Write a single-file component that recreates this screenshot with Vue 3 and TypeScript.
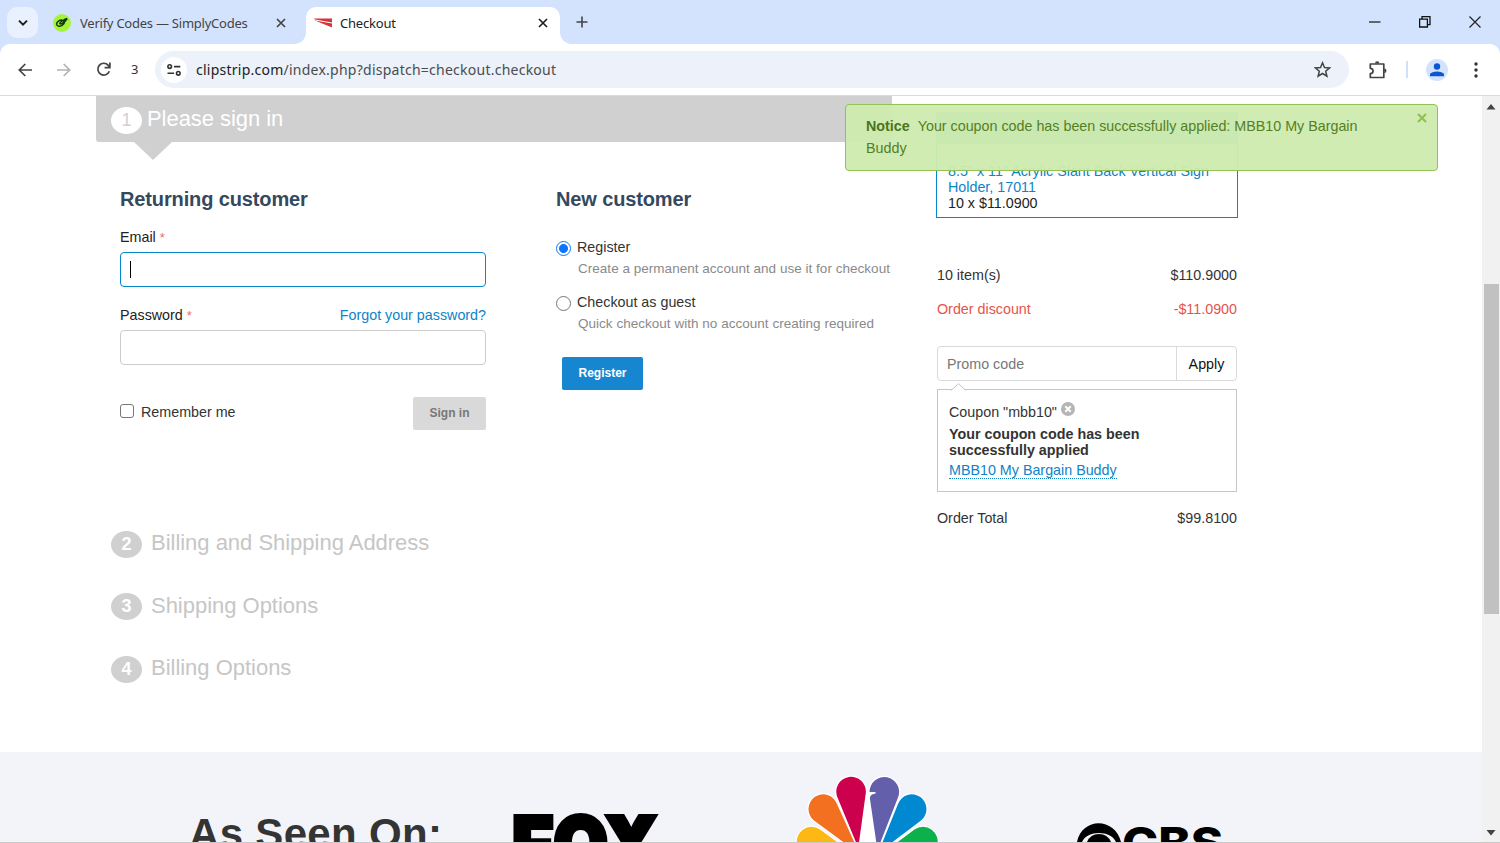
<script setup lang="ts">
import { ref } from 'vue'

interface Step {
  number: number
  title: string
}

const steps: Step[] = [
  { number: 2, title: 'Billing and Shipping Address' },
  { number: 3, title: 'Shipping Options' },
  { number: 4, title: 'Billing Options' },
]

const account = ref<'register' | 'guest'>('register')
const couponOpen = ref(true)
const noticeOpen = ref(true)
</script>

<template>
  <div class="window">
    <header class="tabs">
      <button class="tab-search" aria-label="Search tabs">
        <svg width="12" height="8" viewBox="0 0 12 8"><path d="M2 1.600 6 5.600 10 1.600" fill="none" stroke="#1f1f1f" stroke-width="2" /></svg>
      </button>
      <div class="tab tab-idle">
        <svg class="fav" width="18" height="18" viewBox="0 0 18 18">
          <circle cx="9" cy="9" r="9" fill="#a4f43c" />
          <path d="M9.500 6C6 6 3.400 8 3.600 10.200c.2 2.400 4 2.600 6.300.6 1.700-1.500 2-3.200.9-3.800-1.500-.7-3.600 1.100-4 2.700 2 1 4-.5 7.500-5.200M10.500 6l3.500-1.700" fill="none" stroke="#12370f" stroke-width="1.500" />
        </svg>
        <span class="tab-title verify">Verify Codes — SimplyCodes</span>
        <svg class="tab-x" width="10" height="10" viewBox="0 0 10 10"><path d="M1 1 9 9M9 1 1 9" stroke="#444" stroke-width="1.700" /></svg>
      </div>
      <div class="tab tab-active">
        <svg class="clip" width="18" height="10" viewBox="0 0 18 10">
          <path d="M0 .5H18V9.500L1 2.500Z" fill="#d6333d" />
          <path d="M0 1.800 18 5" stroke="#fff" stroke-width="1" />
        </svg>
        <span class="tab-title check">Checkout</span>
        <svg class="tab-x" width="10" height="10" viewBox="0 0 10 10"><path d="M1 1 9 9M9 1 1 9" stroke="#1f1f1f" stroke-width="1.700" /></svg>
      </div>
      <svg class="plus" width="12" height="12" viewBox="0 0 12 12"><path d="M6 .5V11.500M.5 6H11.500" stroke="#444" stroke-width="1.600" /></svg>
      <div class="controls">
        <svg width="12" height="12" viewBox="0 0 12 12"><path d="M0 6H11.500" stroke="#222" stroke-width="1.300" /></svg>
        <svg width="12" height="12" viewBox="0 0 12 12"><path d="M.6 3.200H8.400V11H.6ZM3 3V.7H11V8.600H8.700" fill="none" stroke="#111" stroke-width="1.300" /></svg>
        <svg width="12" height="12" viewBox="0 0 12 12"><path d="M.5.5 11.500 11.500M11.500.5.5 11.500" stroke="#222" stroke-width="1.200" /></svg>
      </div>
    </header>

    <nav class="toolbar">
      <svg class="back" width="14" height="14" viewBox="0 0 14 14"><path d="M14 7H1.500M7.300 1 1.300 7l6 6" fill="none" stroke="#444" stroke-width="1.700" /></svg>
      <svg class="forward" width="14" height="14" viewBox="0 0 14 14"><path d="M0 7H12.500M6.700 1 12.700 7l-6 6" fill="none" stroke="#b3b3b3" stroke-width="1.700" /></svg>
      <svg class="reload" width="15" height="15" viewBox="0 0 15 15"><path d="M13.300 9.200A5.900 5.900 0 1 1 12.300 3.400L13.700 5.300M13.900.6V5.600H8.600" fill="none" stroke="#444" stroke-width="1.700" /></svg>
      <span class="count">3</span>
      <div class="address">
        <span class="site">
          <svg width="14" height="12" viewBox="0 0 14 12"><g fill="none" stroke="#333" stroke-width="1.600"><circle cx="2.700" cy="2.600" r="1.800" /><path d="M7 2.600H13.300M.5 9.300H7" /><circle cx="11.300" cy="9.300" r="1.800" /></g></svg>
        </span>
        <span class="url">clipstrip.com<i>/index.php?dispatch=checkout.checkout</i></span>
        <svg class="star" width="17" height="17" viewBox="0 0 17 17"><path d="M8.500 1.800 10.500 6.500 15.600 6.900 11.700 10.200 12.900 15.200 8.500 12.500 4.100 15.200 5.300 10.200 1.400 6.900 6.500 6.500Z" fill="none" stroke="#444" stroke-width="1.500" /></svg>
      </div>
      <svg class="puzzle" width="18" height="18" viewBox="0 0 18 18"><path d="M1.300 3H14.800V16.500H1.300V12.700C5 12.500 5 7.600 1.300 7.300Z" fill="none" stroke="#444" stroke-width="1.700" stroke-linejoin="round" /><path d="M6 2.500a2.200 2.200 0 0 1 4.400 0ZM15.300 7.500a2.200 2.200 0 0 1 0 4.400Z" fill="#444" /></svg>
      <span class="divider" />
      <span class="profile"><svg width="14" height="14" viewBox="0 0 14 14"><circle cx="7" cy="3.500" r="3.200" fill="#0b57d0" /><path d="M0 13.300V11C1.500 7.500 12.500 7.500 14 11V13.300Z" fill="#0b57d0" /></svg></span>
      <svg class="dots" width="4" height="16" viewBox="0 0 4 16" fill="#333"><circle cx="2" cy="2" r="1.700" /><circle cx="2" cy="8" r="1.700" /><circle cx="2" cy="14" r="1.700" /></svg>
    </nav>

    <div class="viewport">
      <main class="page">
        <div class="checkout">
          <section class="steps">
            <h2 class="current"><span class="badge">1</span><span class="t-sign">Please sign in</span></h2>
            <div class="forms">
              <form class="returning" @submit.prevent>
                <h3 class="t-ret">Returning customer</h3>
                <div class="label"><span>Email</span><b>*</b></div>
                <div class="field focused"><span class="caret" /></div>
                <div class="label second"><span>Password</span><b>*</b><a>Forgot your password?</a></div>
                <div class="field" />
                <div class="actions">
                  <span class="box" /><span class="t-rem">Remember me</span>
                  <button class="signin">Sign in</button>
                </div>
              </form>
              <form class="new" @submit.prevent>
                <h3 class="t-new">New customer</h3>
                <div class="option" @click="account = 'register'">
                  <span class="radio" :class="{ on: account === 'register' }" /><span>Register</span>
                </div>
                <p>Create a permanent account and use it for checkout</p>
                <div class="option" @click="account = 'guest'">
                  <span class="radio" :class="{ on: account === 'guest' }" /><span>Checkout as guest</span>
                </div>
                <p>Quick checkout with no account creating required</p>
                <button class="register">Register</button>
              </form>
            </div>
            <ol class="later">
              <li v-for="step in steps" :key="step.number">
                <span class="badge">{{ step.number }}</span><span class="step-title">{{ step.title }}</span>
              </li>
            </ol>
          </section>

          <aside class="summary">
            <div class="product">
              <div class="product-head" />
              <a>8.5" x 11" Acrylic Slant Back Vertical Sign</a>
              <a>Holder, 17011</a>
              <span class="t-qty">10 x $11.0900</span>
            </div>
            <div class="row"><span>10 item(s)</span><span>$110.9000</span></div>
            <div class="row discount"><span>Order discount</span><span>-$11.0900</span></div>
            <div class="promo"><span>Promo code</span><button>Apply</button></div>
            <div v-if="couponOpen" class="coupon">
              <svg class="notch" width="15" height="8" viewBox="0 0 15 8"><path d="M0 7.500 7.500.7 15 7.500V8H0Z" fill="#fff" /><path d="M0 7.500 7.500.7 15 7.500" fill="none" stroke="#c6c6c6" /></svg>
              <div class="coupon-name">
                <span>Coupon "mbb10"</span>
                <svg width="14" height="14" viewBox="0 0 14 14" @click="couponOpen = false"><circle cx="7" cy="7" r="7" fill="#b5b5b5" /><path d="M4.300 4.300 9.700 9.700M9.700 4.300 4.300 9.700" stroke="#fff" stroke-width="2" /></svg>
              </div>
              <strong>Your coupon code has been</strong>
              <strong>successfully applied</strong>
              <a class="t-mbb">MBB10 My Bargain Buddy</a>
            </div>
            <div class="row total"><span>Order Total</span><span>$99.8100</span></div>
          </aside>
        </div>

        <footer class="seen">
          <svg width="1482" height="90" viewBox="0 752 1482 90">
            <text class="as" x="189" y="848" textLength="253">As Seen On:</text>
            <text class="fox" x="512" y="871" textLength="147" lengthAdjust="spacingAndGlyphs">FOX</text>
            <g stroke="#fff" stroke-width="2.400" paint-order="stroke">
              <path d="M868 794 878 796 881 860H855Z" fill="#fff" />
              <path d="M848 850 820 829.500A14.700 14.700 0 0 0 797.500 846L830 860Z" fill="#fdb813" />
              <path d="M887 850 914.500 829.500A14.700 14.700 0 0 1 937 846L900 860Z" fill="#0db14b" />
              <path d="M856 846 837 804A14.700 14.700 0 1 0 814 820.500L846 844Z" fill="#f37021" />
              <path d="M881 846 898 804A14.700 14.700 0 1 1 921 820.500L890 844Z" fill="#0089d0" />
              <path d="M857.500 846 837.500 797.500A14.800 14.800 0 1 1 865.800 793L858.500 846Z" fill="#cc004c" />
              <path d="M879 846 898 797.500A14.800 14.800 0 1 0 869.500 792H875.500V793.500L872 794.500Q869.500 796 870 799L876.800 846Z" fill="#645faa" />
            </g>
            <path d="M1077 842C1082 817 1115 817 1121 842L1116 842C1111 830 1087 830 1082 842Z" fill="#000" />
            <path d="M1087 842A13 13 0 0 1 1111 842Z" fill="#000" />
            <text class="cbs" x="1122" y="858" textLength="101" lengthAdjust="spacingAndGlyphs">CBS</text>
          </svg>
        </footer>
      </main>
      <div class="scrollbar">
        <svg width="10" height="6" viewBox="0 0 10 6"><path d="M5 0 9.500 5.500H.5Z" fill="#444" /></svg>
        <div class="thumb" />
        <svg width="10" height="6" viewBox="0 0 10 6"><path d="M5 5.500 9.500 0H.5Z" fill="#444" /></svg>
      </div>
      <div v-if="noticeOpen" class="notice">
        <div><strong>Notice</strong><span>Your coupon code has been successfully applied: MBB10 My Bargain</span></div>
        <div>Buddy</div>
        <svg class="dismiss" width="10" height="10" viewBox="0 0 10 10" @click="noticeOpen = false"><path d="M1 1 9 9M9 1 1 9" stroke="#8fc152" stroke-width="2.200" /></svg>
      </div>
    </div>
  </div>
</template>

<style>
body { margin: 0; background: #fff; overflow: hidden; }
</style>

<style scoped>
* { box-sizing: border-box; }
.window { width: 1500px; height: 843px; overflow: hidden; display: flex; flex-direction: column; background: linear-gradient(#d3e3fd 60px, #fff 60px); font-family: "Liberation Sans", Arial, sans-serif; font-size: 14.3px; color: #333; white-space: nowrap; }
svg { display: block; flex: none; }
button { border: 0; padding: 0; font: inherit; background: none; }
h2, h3, p, ol { margin: 0; padding: 0; }

.tabs { height: 44px; flex: none; background: #d3e3fd; display: flex; align-items: flex-start; font-family: "Noto Sans", sans-serif; }
.tab-search { width: 31px; height: 31px; margin: 7px 0 0 7px; border-radius: 10px; background: #e9f1fe; display: flex; align-items: center; justify-content: center; }
.tab { height: 37px; margin-top: 7px; display: flex; align-items: center; padding-bottom: 5px; }
.tab-idle { width: 252px; margin-left: 15px; color: #444; }
.tab-title { margin-left: 9px; font-size: 13px; line-height: 18px; }
.verify { letter-spacing: -.24px; }
.check { letter-spacing: -.2px; margin-left: 8px; }
.tab-x { margin-left: auto; }
.tab-idle .tab-x { margin-right: 19px; }
.tab-active { position: relative; width: 254px; margin-left: 1px; border-radius: 10px 10px 0 0; background: #fff; padding-left: 8px; color: #222; }
.tab-active::before, .tab-active::after { content: ""; position: absolute; bottom: 0; width: 11px; height: 11px; }
.tab-active::before { left: -11px; background: radial-gradient(circle at 0 0, transparent 10.500px, #fff 11px); }
.tab-active::after { right: -11px; background: radial-gradient(circle at 100% 0, transparent 10.500px, #fff 11px); }
.tab-active .tab-x { margin-right: 12px; }
.plus { margin: 16px 0 0 16px; }
.controls { margin: 16px 19px 0 auto; display: flex; gap: 38px; }

.toolbar { height: 52px; flex: none; background: #fff; border-bottom: 1px solid #dcdcdc; display: flex; align-items: center; border-radius: 10px 10px 0 0; font-family: "Noto Sans", sans-serif; color: #333; }
.back { margin-left: 18px; }
.forward { margin-left: 25px; }
.reload { margin-left: 25px; }
.count { margin: -2px 0 0 20px; width: 8px; font-size: 13px; }
.address { margin-left: 16px; width: 1194px; height: 37px; border-radius: 19px; background: #ecf1fa; display: flex; align-items: center; padding-left: 6px; }
.site { width: 26px; height: 26px; border-radius: 50%; background: #fff; display: flex; align-items: center; justify-content: center; }
.url { margin-left: 9px; font-size: 14px; letter-spacing: .245px; color: #222; }
.url i { font-style: normal; color: #494c50; }
.star { margin-left: auto; margin-right: 18px; }
.puzzle { margin-left: 20px; }
.divider { margin-left: 19px; width: 2px; height: 17px; background: #cfe0fc; }
.profile { margin-left: 18px; width: 22px; height: 22px; border-radius: 50%; background: #d3e3fd; display: flex; align-items: center; justify-content: center; }
.dots { margin-left: 26px; }

.viewport { position: relative; flex: 1; min-height: 0; display: flex; background: #fff; border-bottom: 1px solid #c9c9c9; }
.page { width: 1482px; overflow: hidden; }
.checkout { height: 656px; display: flex; padding-left: 96px; }
.steps { width: 796px; }
.current { position: relative; height: 46px; background: #d0d0d0; border-radius: 0 0 3px 3px; color: #fff; display: flex; align-items: center; padding-left: 15px; font-weight: 400; font-size: 22px; }
.current::after { content: ""; position: absolute; left: 38px; top: 46px; border: 19px solid transparent; border-top: 18px solid #d0d0d0; border-bottom: 0; }
.badge { width: 31px; height: 27px; border-radius: 50%; display: flex; align-items: center; justify-content: center; font-size: 18px; font-weight: 700; background: #d0d0d0; color: #fff; }
.current .badge { margin-top: 2px; background: #fff; color: #d0d0d0; font-weight: 400; }
.t-sign { margin-left: 5px; letter-spacing: -.05px; }
.forms { display: flex; height: 362px; padding: 45px 0 0 24px; }
h3 { font-size: 20px; line-height: 24px; color: #34495e; letter-spacing: -.13px; }
.returning { width: 366px; }
.new { margin-left: 70px; }
.label { display: flex; height: 20px; align-items: center; margin-top: 16px; color: #222; }
.label b { color: #ee6e5c; font-weight: 400; margin-left: 4px; font-size: 13px; }
.label.second { margin-top: 18px; }
.label a { margin-left: auto; }
a { color: #0e84c8; }
.field { height: 35px; border: 1px solid #ccc; border-radius: 4px; margin-top: 5px; display: flex; align-items: center; padding-left: 9px; }
.focused { border-color: #0388cc; }
.caret { width: 1px; height: 17px; background: #000; }
.actions { display: flex; align-items: center; margin-top: 32px; height: 33px; }
.box { width: 14px; height: 14px; border: 1px solid #767676; border-radius: 3px; margin-top: -5px; }
.t-rem { margin: -3px 0 0 7px; }
.signin { margin-left: auto; width: 73px; height: 33px; padding-bottom: 2px; background: #d9d9d9; color: #777; font-size: 12px; font-weight: 700; border-radius: 2px; }
.option { display: flex; align-items: center; height: 20px; margin-top: 14px; }
.t-new + .option { margin-top: 26px; }
.radio { width: 15px; height: 15px; border: 1px solid #767676; border-radius: 50%; margin-top: 2px; }
.radio.on { border-color: #0b75ff; background: radial-gradient(circle, #0b75ff 4px, #fff 5px); }
.option span + span { margin-left: 6px; }
.new p { margin: 3px 0 0 22px; line-height: 18px; color: #8a8a8a; font-size: 13.500px; letter-spacing: .025px; }
.register { display: block; margin: 24px 0 0 6px; width: 81px; height: 33px; padding-bottom: 2px; background: #1786d0; color: #fff; font-size: 12px; font-weight: 700; border-radius: 2px; }
.later { list-style: none; padding: 9px 0 0 15px; font-size: 22px; color: #c6c6c6; }
.later li { height: 62.500px; display: flex; align-items: center; gap: 9px; }
.step-title { margin-top: -2px; letter-spacing: -.02px; }

.summary { width: 302px; margin-left: 44px; padding-top: 16px; }
.product { height: 106px; border: 1px solid #0388cc; display: flex; flex-direction: column; line-height: 16px; padding-left: 11px; }
.product-head { height: 32px; margin: -1px -1px 19px -12px; background: #7db7d4; flex: none; }
.t-qty { color: #222; }
.row { display: flex; justify-content: space-between; height: 18px; line-height: 18px; margin: 48px 1px 0; }
.row.discount { margin-top: 16px; color: #e65448; }
.promo { height: 35px; margin: 28px 1px 0; border: 1px solid #dadada; border-radius: 4px; display: flex; align-items: center; padding-left: 9px; color: #777; }
.promo button { margin-left: auto; width: 60px; height: 33px; border-left: 1px solid #dadada; color: #111; }
.coupon { position: relative; height: 103px; margin: 8px 1px 0; border: 1px solid #c6c6c6; padding: 12px 0 0 11px; display: flex; flex-direction: column; align-items: flex-start; line-height: 17px; }
.notch { position: absolute; left: 13px; top: -7px; }
.coupon-name { display: flex; gap: 4px; height: 24px; line-height: 21px; }
.coupon strong + strong { margin-top: -1px; }
.t-mbb { margin-top: 3px; line-height: 16px; border-bottom: 1px dotted #0e84c8; }
.row.total { margin-top: 17px; }

.seen { height: 90px; background: #f3f4f9; }
.as { font: 700 42px "Liberation Sans", Arial, sans-serif; fill: #343434; }
.fox { font: 900 76px Inter, sans-serif; fill: #000; stroke: #000; stroke-width: 4px; }
.cbs { font: 800 43px Inter, sans-serif; fill: #000; }

.scrollbar { width: 18px; background: #f1f1f1; display: flex; flex-direction: column; align-items: center; padding: 8px 0 6px; }
.thumb { width: 15px; height: 330px; background: #c1c1c1; margin: 174px 0 auto 1px; }
.notice { position: absolute; left: 845px; top: 8px; width: 593px; height: 67px; border: 1px solid #92c255; border-radius: 4px; background: rgba(207, 235, 174, .95); color: #557f24; padding: 10px 0 0 20px; line-height: 22px; }
.notice strong { margin-right: 8px; color: #4a751b; }
.dismiss { position: absolute; right: 10px; top: 8px; }
</style>
